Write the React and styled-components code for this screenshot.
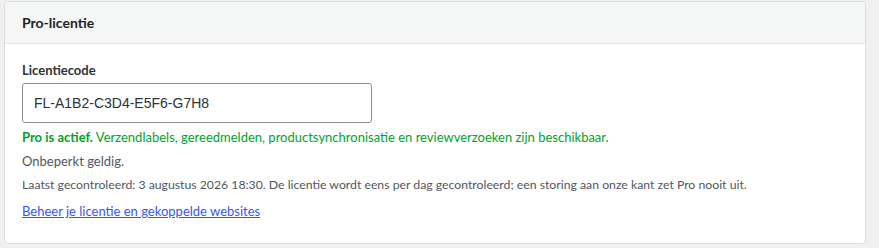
import styled, { createGlobalStyle } from "styled-components";

const GlobalStyle = createGlobalStyle`
  html, body {
    margin: 0;
    background: #f0f0f1;
  }
  body {
    font-family: "Lato", "Noto Sans", sans-serif;
    color: #1d2327;
  }
`;

const Page = styled.div`
  padding: 1px 0 0 4px;
`;

const Card = styled.section`
  width: 862px;
  height: 243px;
  box-sizing: border-box;
  background: #fff;
  border: 1px solid #dcdcde;
  border-radius: 4px;
  overflow: hidden;
`;

const CardHeader = styled.header`
  height: 42px;
  box-sizing: border-box;
  display: flex;
  align-items: center;
  padding: 0 17px;
  background: #f5f6f6;
  border-bottom: 1px solid #e5e7e8;
`;

const Title = styled.h2`
  margin: 0;
  font-size: 14px;
  font-weight: 700;
  color: #1d2327;
`;

const CardBody = styled.div`
  padding: 17px 17px 0;
  display: flex;
  flex-direction: column;
`;

const Label = styled.label`
  font-size: 13px;
  font-weight: 700;
  color: #2c3338;
  line-height: 18px;
`;

const CodeInput = styled.input`
  margin-top: 4px;
  width: 350px;
  height: 40px;
  box-sizing: border-box;
  padding: 0 11px;
  border: 1px solid #8c8f94;
  border-radius: 3px;
  font-family: "Liberation Sans", Arial, sans-serif;
  font-size: 14px;
  color: #2c3338;
  outline: none;
`;

const Note = styled.p`
  margin: ${(p) => p.$gap}px 0 0;
  font-size: ${(p) => (p.$small ? 12.25 : 13)}px;
  line-height: ${(p) => (p.$small ? 17 : 18)}px;
  color: ${(p) => p.$color || "#50575e"};
`;

const Link = styled.a`
  margin-top: 9px;
  font-size: 13px;
  line-height: 18px;
  color: #3858e9;
  text-decoration: underline;
  align-self: flex-start;
`;

export default function App() {
  return (
    <>
      <GlobalStyle />
      <Page>
        <Card>
          <CardHeader>
            <Title>Pro-licentie</Title>
          </CardHeader>
          <CardBody>
            <Label htmlFor="licentiecode">Licentiecode</Label>
            <CodeInput
              id="licentiecode"
              defaultValue="FL-A1B2-C3D4-E5F6-G7H8"
            />
            <Note $gap={5} $color="#00a32a">
              <strong>Pro is actief.</strong> Verzendlabels, gereedmelden,
              productsynchronisatie en reviewverzoeken zijn beschikbaar.
            </Note>
            <Note $gap={6}>Onbeperkt geldig.</Note>
            <Note $gap={6} $small>
              Laatst gecontroleerd: 3 augustus 2026 18:30. De licentie wordt
              eens per dag gecontroleerd; een storing aan onze kant zet Pro
              nooit uit.
            </Note>
            <Link href="#">Beheer je licentie en gekoppelde websites</Link>
          </CardBody>
        </Card>
      </Page>
    </>
  );
}
